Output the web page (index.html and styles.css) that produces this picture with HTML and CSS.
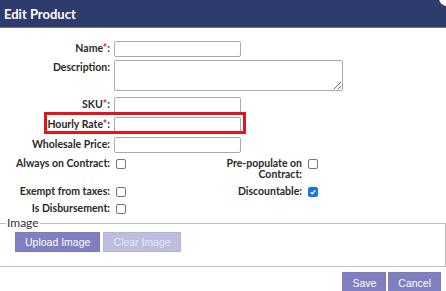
FILE: index.html
```html
<!DOCTYPE html>
<html lang="en">
<head>
    <meta charset="utf-8">
    <title>Edit Product</title>
    <link rel="stylesheet" href="styles.css">
</head>
<body>

<div class="dialog">
    <div class="titlebar">
        <span class="title">Edit Product</span>
        <span class="close"></span>
    </div>

    <form class="product-form">
        <div class="row row-name">
            <label class="lbl">Name<span class="req">*</span>:</label>
            <input type="text" class="txt">
        </div>
        <div class="row row-desc">
            <label class="lbl">Description:</label>
            <textarea class="area"></textarea>
        </div>
        <div class="row">
            <label class="lbl">SKU<span class="req">*</span>:</label>
            <input type="text" class="txt">
        </div>
        <div class="row">
            <label class="lbl">Hourly Rate<span class="req">*</span>:</label>
            <input type="text" class="txt">
            <span class="highlight"></span>
        </div>
        <div class="row">
            <label class="lbl">Wholesale Price:</label>
            <input type="text" class="txt">
        </div>

        <div class="checks">
            <label class="lbl">Always on Contract:</label>
            <input type="checkbox" class="chk">
            <label class="lbl">Pre-populate on Contract:</label>
            <input type="checkbox" class="chk">

            <label class="lbl">Exempt from taxes:</label>
            <input type="checkbox" class="chk">
            <label class="lbl">Discountable:</label>
            <input type="checkbox" class="chk" checked>

            <label class="lbl">Is Disbursement:</label>
            <input type="checkbox" class="chk">
        </div>

        <fieldset class="image-box">
            <legend>Image</legend>
            <div class="image-buttons">
                <button type="button" class="btn">Upload Image</button>
                <button type="button" class="btn btn-off">Clear Image</button>
            </div>
        </fieldset>

        <div class="actions">
            <button type="button" class="btn">Save</button>
            <button type="button" class="btn">Cancel</button>
        </div>
    </form>
</div>

</body>
</html>
```

FILE: styles.css
```css
body {
    margin: 0;
    background: #fff;
    font-family: Lato, "Liberation Sans", sans-serif;
    overflow: hidden;
}

.titlebar {
    position: relative;
    height: 27px;
    background: #2f3a6d;
    border-bottom: 1px solid #6a739c;
    overflow: hidden;
}

.title {
    display: block;
    padding: 6px 0 0 4px;
    color: #fff;
    font-size: 13px;
    font-weight: bold;
}

.close {
    position: absolute;
    right: -9px;
    top: -10px;
    width: 16px;
    height: 16px;
    border-radius: 50%;
    background: #fff;
}

.product-form {
    padding-top: 13px;
}

.row {
    position: relative;
    display: flex;
    align-items: flex-start;
    margin-bottom: 4px;
}

.row-name {
    margin-bottom: 3px;
}

.row-desc {
    margin-bottom: 6px;
}

.lbl {
    width: 110px;
    flex: none;
    text-align: right;
    font-size: 10.5px;
    font-weight: bold;
    color: #2a2a2a;
    line-height: 11px;
    padding-top: 2px;
}

.req {
    color: #e0202a;
}

.txt {
    width: 127px;
    height: 16px;
    margin: 0 0 0 4px;
    padding: 0 3px;
    box-sizing: border-box;
    border: 1px solid #a9a9a9;
    border-radius: 2px;
}

.area {
    width: 229px;
    height: 31px;
    margin: 0 0 0 4px;
    box-sizing: border-box;
    border: 1px solid #a9a9a9;
    border-radius: 2px;
    resize: both;
}

.highlight {
    position: absolute;
    left: 44px;
    top: -5px;
    width: 202px;
    height: 22px;
    box-sizing: border-box;
    border: 3px solid #e3141c;
}

.checks {
    display: grid;
    grid-template-columns: 110px 112px 80px 16px;
    row-gap: 6px;
    margin-top: 5px;
}

.checks .lbl {
    width: auto;
    padding-top: 0;
}

.chk {
    appearance: none;
    width: 10px;
    height: 10px;
    margin: 1px 0 0 6px;
    border: 1px solid #767676;
    border-radius: 2px;
    background: #fff;
}

.chk:checked {
    border-color: #1a73e8;
    background: #1a73e8 url("data:image/svg+xml,%3Csvg xmlns='http://www.w3.org/2000/svg' viewBox='0 0 10 10'%3E%3Cpath d='M2 5.2l2 2 4-4.4' fill='none' stroke='white' stroke-width='1.6'/%3E%3C/svg%3E") center/100% no-repeat;
}

.image-box {
    margin: 2px 0 0 0;
    padding: 2px 0 14px 6px;
    border: 1px solid #c0c0c0;
    border-left: none;
    min-width: 0;
}

.image-box legend {
    padding: 0 1px;
    font-size: 12px;
    line-height: 14px;
    color: #333;
}

.image-buttons {
    display: flex;
    gap: 3px;
    padding-left: 9px;
}

.btn {
    height: 20px;
    padding: 0 9px;
    border: 1px solid #7b7bb8;
    background: #8080c0;
    color: #fff;
    font-family: "Liberation Sans", Arial, sans-serif;
    font-size: 10.5px;
    margin: 0;
}

.btn-off {
    background: #bdbde0;
    border-color: #b5b5d8;
    color: #e6e6f4;
}

.actions {
    display: flex;
    justify-content: flex-end;
    gap: 2px;
    margin-top: 5px;
    padding-right: 5px;
}

.actions .btn {
    height: 22px;
}
```
